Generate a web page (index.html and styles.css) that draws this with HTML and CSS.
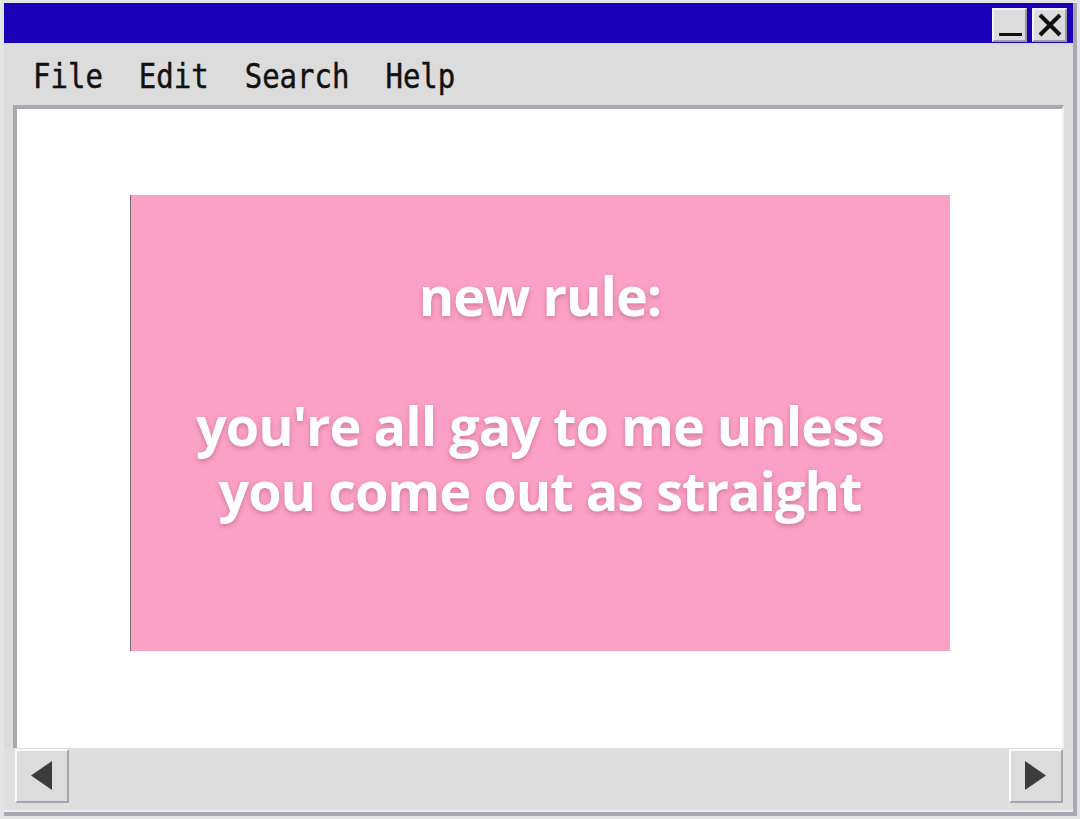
FILE: index.html
```
<!DOCTYPE html>
<html lang="en">
<head>
  <meta charset="UTF-8" />
  <title>new rule</title>
  <link rel="stylesheet" href="styles.css">
</head>
<body>
  <div class="window">
    <div class="titlebar">
      <button class="title-btn" aria-label="Minimize">
        <svg width="26" height="26" viewBox="0 0 26 26"><rect x="2" y="21" width="23" height="3" fill="#111"/></svg>
      </button>
      <button class="title-btn" aria-label="Close">
        <svg width="26" height="26" viewBox="0 0 26 26"><path d="M3 3 L23 23 M23 3 L3 23" stroke="#111" stroke-width="4" fill="none"/></svg>
      </button>
    </div>

    <div class="menubar">
      <span class="menu-item">File</span>
      <span class="menu-item">Edit</span>
      <span class="menu-item">Search</span>
      <span class="menu-item">Help</span>
    </div>

    <div class="content">
      <div class="card">
        <p class="card-title">new rule:</p>
        <div class="card-text">
          <p class="line">you're all gay to me unless</p>
          <p class="line">you come out as straight</p>
        </div>
      </div>
    </div>

    <div class="scrollbar">
      <button class="scroll-btn" aria-label="Scroll left">
        <svg width="22" height="30" viewBox="0 0 22 30"><polygon points="21,0 21,29 0,14.5" fill="#3c3c3c"/></svg>
      </button>
      <button class="scroll-btn" aria-label="Scroll right">
        <svg width="22" height="30" viewBox="0 0 22 30"><polygon points="0,0 0,29 21,14.5" fill="#3c3c3c"/></svg>
      </button>
    </div>
  </div>
</body>
</html>
```

FILE: styles.css
```
/* base */
* {
  box-sizing: border-box;
}

body {
  margin: 0;
  padding: 3px 0 0 4px;
  background: #e4e4e4;
  font-family: "DejaVu Sans Mono", monospace;
  overflow: hidden;
}

/* window frame */
.window {
  width: 1073px;
  height: 813px;
  display: flex;
  flex-direction: column;
  background: #dcdcdc;
  border-right: 4px solid #aba6b1;
  border-bottom: 4px solid #aba6b1;
}

.titlebar {
  height: 40px;
  background: #1a00b9;
  display: flex;
  justify-content: flex-end;
  align-items: flex-start;
  gap: 5px;
  padding: 5px 6px 0 0;
}

.title-btn {
  width: 35px;
  height: 34px;
  padding: 0;
  background: #dcdcdc;
  border: 2px solid;
  border-color: #f4f4f4 #9f9aa6 #9f9aa6 #f4f4f4;
  display: flex;
  align-items: center;
  justify-content: center;
}

/* menu */
.menubar {
  height: 62px;
  display: flex;
  align-items: center;
  gap: 36px;
  padding: 4px 0 0 29px;
}

.menu-item {
  font-size: 29px;
  color: #111;
  display: inline-block;
  transform: scaleY(1.15);
  -webkit-text-stroke: 0.4px #111;
}

/* document area */
.content {
  height: 643px;
  margin: 0 9px 0 9px;
  background: #fff;
  border-top: 4px solid #aba6b1;
  border-left: 4px solid #aba6b1;
  border-right: 2px solid #f2f2f2;
  display: flex;
  justify-content: center;
  padding-top: 86px;
}

.card {
  width: 820px;
  height: 456px;
  background: #fca1c6;
  border-left: 1px solid #6e6a6c;
  font-family: "Open Sans", "Liberation Sans", sans-serif;
  font-weight: 700;
  color: #fff;
  text-align: center;
  text-shadow: 0 2px 5px rgba(120, 40, 70, 0.35);
  letter-spacing: -1px;
}

.card-title {
  margin: 70px 0 0;
  font-size: 54px;
  line-height: 60px;
}

.card-text {
  margin-top: 68px;
  font-size: 54px;
}

.line {
  margin: 0;
  line-height: 65px;
}

/* horizontal scrollbar */
.scrollbar {
  flex: 1;
  background: #dfdfdf;
  display: flex;
  justify-content: space-between;
  align-items: flex-start;
  padding: 1px 10px 0 11px;
  border-bottom: 2px solid #efefef;
}

.scroll-btn {
  width: 54px;
  height: 54px;
  padding: 0;
  background: #dcdcdc;
  border: 2px solid;
  border-color: #fafafa #a8a3ae #a8a3ae #fafafa;
  display: flex;
  align-items: center;
  justify-content: center;
}
```
